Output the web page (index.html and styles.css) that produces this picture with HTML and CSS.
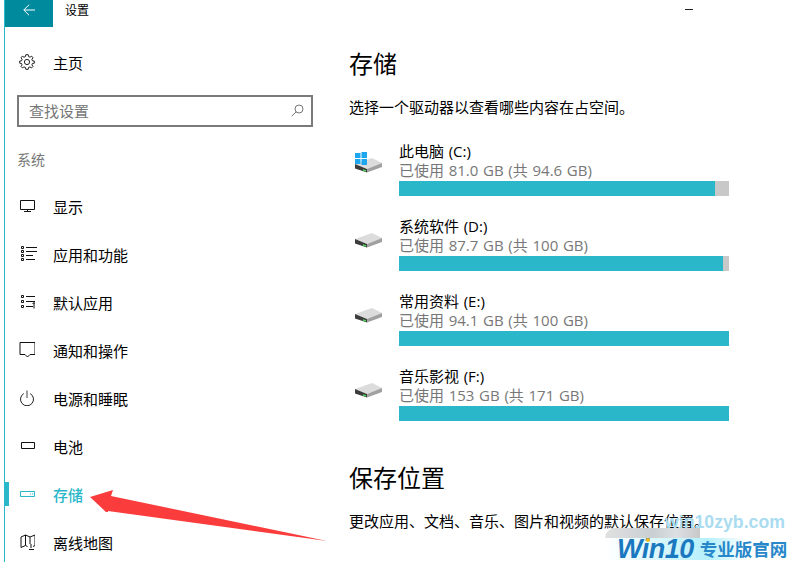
FILE: index.html
```html
<!DOCTYPE html>
<html lang="zh-CN">
<head>
    <meta charset="UTF-8">
    <title>设置</title>
    <link rel="stylesheet" href="styles.css">
</head>
<body>
    <div class="window">
        <header class="titlebar">
            <div class="back-btn">
                <svg width="12" height="12" viewBox="0 0 12 12" fill="none" stroke="#fff" stroke-width="1"><path d="M.8 6H12M6 .8L.8 6L6 11.2"/></svg>
            </div>
            <span class="title">设置</span>
            <span class="min-btn"></span>
        </header>

        <div class="content">
            <nav class="sidebar">
                <div class="home">
                    <svg class="icon" width="16" height="16" viewBox="0 0 16 16" fill="none" stroke="#222" stroke-width="1"><circle cx="8" cy="8" r="2.6"/><path d="M6.8 .7H9.2L9.6 2.6L11 3.2L12.7 2.2L14 3.8L12.9 5.3L13.4 6.8L15.3 7V9.2L13.4 9.5L12.9 10.9L14 12.4L12.5 13.9L11 12.9L9.6 13.4L9.2 15.3H6.8L6.4 13.4L5 12.9L3.4 13.9L2 12.4L3.1 10.9L2.6 9.5L.7 9.2V7L2.6 6.8L3.1 5.3L2 3.8L3.3 2.2L5 3.2L6.4 2.6Z"/></svg>
                    <span>主页</span>
                </div>
                <div class="search">
                    <span>查找设置</span>
                    <svg width="13" height="13" viewBox="0 0 13 13" fill="none" stroke="#777" stroke-width="1"><circle cx="8" cy="5" r="4"/><path d="M5.2 7.8L.7 12.3"/></svg>
                </div>
                <div class="group-label">系统</div>

                <a class="nav-item">
                    <svg class="icon" width="16" height="16" viewBox="0 0 16 16" fill="none" stroke="#111" stroke-width="1"><path d="M1.5 2.5H15.5V11.5H1.5ZM8.5 11.5V13.5M5 13.5H12"/></svg>
                    <span>显示</span>
                </a>
                <a class="nav-item">
                    <svg class="icon" width="16" height="16" viewBox="0 0 16 16" fill="none" stroke="#111" stroke-width="1" overflow="visible"><path d="M2.5 .5H4.5V2.5H2.5ZM2.5 4.5H4.5V6.5H2.5ZM2.5 8.5H4.5V10.5H2.5ZM2.5 12.5H4.5V14.5H2.5ZM7 1.5H18M7 5.5H18M7 9.5H14M7 13.5H16"/></svg>
                    <span>应用和功能</span>
                </a>
                <a class="nav-item">
                    <svg class="icon" width="16" height="16" viewBox="0 0 16 16" fill="none" stroke="#111" stroke-width="1"><path d="M2.5 1.5H4.5V3.5H2.5ZM2.5 6.5H4.5V8.5H2.5ZM2.5 11.5H4.5V13.5H2.5ZM7 2.5H16M7 7.5H16M7 12.5H14M15 14.5V8.5M13.5 10L15 8.5L16.5 10"/></svg>
                    <span>默认应用</span>
                </a>
                <a class="nav-item">
                    <svg class="icon" width="16" height="16" viewBox="0 0 16 16" fill="none" stroke="#111" stroke-width="1"><path d="M1 .5H16V12.5H11L8.5 15L6 12.5H1Z"/></svg>
                    <span>通知和操作</span>
                </a>
                <a class="nav-item">
                    <svg class="icon" width="16" height="16" viewBox="0 0 16 16" fill="none" stroke="#222" stroke-width="1"><path d="M4.8 3.6A6.5 6.5 0 1 0 11.2 3.6"/><path d="M8 .5V8" stroke="#777" stroke-width="1.4"/></svg>
                    <span>电源和睡眠</span>
                </a>
                <a class="nav-item">
                    <svg class="icon" width="16" height="16" viewBox="0 0 16 16" fill="none" stroke="#111" stroke-width="1"><path d="M2.5 4.5H15.5V10.5H2.5Z"/><path d="M16.5 6.5V8.5"/></svg>
                    <span>电池</span>
                </a>
                <a class="nav-item active">
                    <svg class="icon" width="16" height="16" viewBox="0 0 16 16" fill="none" stroke="#2ab7ca" stroke-width="1"><path d="M1.5 5.5H15.5V10.5H1.5ZM11 8H12M13 8H14"/></svg>
                    <span>存储</span>
                </a>
                <a class="nav-item">
                    <svg class="icon" width="16" height="16" viewBox="0 0 16 16" fill="none" stroke="#111" stroke-width="1"><path d="M2 3L6.5 1L11 3L16 1V11.5L14 12.5M2 3V13.5L6.5 11.5L8.5 12.5M6.5 1V11.5M11 3V10M12 10V14M10 15.5H15"/></svg>
                    <span>离线地图</span>
                </a>
            </nav>

            <main class="main">
                <h1>存储</h1>
                <p class="desc">选择一个驱动器以查看哪些内容在占空间。</p>

                <div class="drive">
                    <div class="drive-icon">
                        <svg width="30" height="26" viewBox="0 -5 30 26"><use href="#disk"/><g fill="#1ea7ee"><rect x="1" y="-3" width="5.5" height="5"/><rect x="7.5" y="-4" width="5.5" height="6"/><rect x="1" y="3" width="5.5" height="5"/><rect x="7.5" y="3" width="5.5" height="6"/></g></svg>
                    </div>
                    <div class="drive-info">
                        <div class="drive-name">此电脑 (C:)</div>
                        <div class="drive-used">已使用 81.0 GB (共 94.6 GB)</div>
                        <div class="bar"><div class="fill" style="width: 95.8%"></div></div>
                    </div>
                </div>
                <div class="drive">
                    <div class="drive-icon">
                        <svg width="30" height="26" viewBox="0 -5 30 26"><use href="#disk"/></svg>
                    </div>
                    <div class="drive-info">
                        <div class="drive-name">系统软件 (D:)</div>
                        <div class="drive-used">已使用 87.7 GB (共 100 GB)</div>
                        <div class="bar"><div class="fill" style="width: 98.2%"></div></div>
                    </div>
                </div>
                <div class="drive">
                    <div class="drive-icon">
                        <svg width="30" height="26" viewBox="0 -5 30 26"><use href="#disk"/></svg>
                    </div>
                    <div class="drive-info">
                        <div class="drive-name">常用资料 (E:)</div>
                        <div class="drive-used">已使用 94.1 GB (共 100 GB)</div>
                        <div class="bar"><div class="fill" style="width: 100%"></div></div>
                    </div>
                </div>
                <div class="drive">
                    <div class="drive-icon">
                        <svg width="30" height="26" viewBox="0 -5 30 26"><use href="#disk"/></svg>
                    </div>
                    <div class="drive-info">
                        <div class="drive-name">音乐影视 (F:)</div>
                        <div class="drive-used">已使用 153 GB (共 171 GB)</div>
                        <div class="bar"><div class="fill" style="width: 100%"></div></div>
                    </div>
                </div>

                <h1 class="section-two">保存位置</h1>
                <p class="desc">更改应用、文档、音乐、图片和视频的默认保存位置。</p>
            </main>
        </div>
    </div>

    <!-- 红色箭头 -->
    <svg class="arrow" width="245" height="60" viewBox="0 0 245 60"><path d="M0 8L23 1L21 7L237 52L18 22L18 23L16 23Z" fill="#fb3c3c"/></svg>

    <!-- 水印 -->
    <div class="wm-band"></div>
    <div class="wm-url">win10zyb.com</div>
    <div class="wm-box">
        <span class="wm-logo">Win10</span>
        <span class="wm-name">专业版官网</span>
        <span class="wm-dot"></span>
    </div>

    <svg width="0" height="0" class="defs">
        <defs>
            <g id="disk">
                <path d="M1 8L18 2L28 7L13 13Z" fill="#dcdcdc"/>
                <path d="M1 8V12.5L13 16.5V13Z" fill="#3c3c3c"/>
                <path d="M13 13V16.5L28 11V7Z" fill="#a0a0a0"/>
                <path d="M9 14L12 15" stroke="#4fd05a" stroke-width="1.4"/>
            </g>
        </defs>
    </svg>
</body>
</html>
```

FILE: styles.css
```css
* {
    box-sizing: border-box;
}

html, body {
    height: 100%;
    margin: 0;
    overflow: hidden;
}

body {
    position: relative;
    background: #fff;
    color: #000;
    font-family: "Open Sans", "Noto Sans CJK SC", sans-serif;
    font-size: 15px;
}

.window {
    height: 562px;
    margin-left: 4px;
    border-left: 1px solid #2ab7ca;
    overflow: hidden;
}

.titlebar {
    display: flex;
    align-items: center;
    height: 27px;
}

.back-btn {
    display: flex;
    align-items: center;
    justify-content: center;
    width: 48px;
    height: 27px;
    padding-bottom: 7px;
    background: #008a9e;
}

.title {
    margin: 0 0 7px 12px;
    font-size: 12px;
}

.min-btn {
    width: 8px;
    height: 1px;
    margin-left: 596px;
    margin-bottom: 9px;
    background: #222;
}

.content {
    display: flex;
}

.sidebar {
    flex: none;
    width: 344px;
    padding-top: 20px;
}

.home {
    display: flex;
    align-items: center;
    height: 30px;
    padding-left: 14px;
}

.icon {
    flex: none;
    margin-right: 18px;
}

.search {
    display: flex;
    align-items: center;
    justify-content: space-between;
    width: 296px;
    height: 32px;
    margin: 18px 0 0 12px;
    padding: 0 7px 2px 10px;
    border: 2px solid #7a7a7a;
    color: #777;
}

.group-label {
    height: 22px;
    margin: 22px 0 0 12px;
    color: #777;
    font-size: 14px;
    line-height: 22px;
}

.nav-item {
    display: flex;
    align-items: center;
    height: 48px;
    padding-left: 14px;
}

.group-label + .nav-item {
    margin-top: 11px;
}

.nav-item.active {
    position: relative;
    color: #2ab7ca;
    font-weight: 500;
}

.nav-item.active::before {
    content: "";
    position: absolute;
    left: 0;
    top: 12px;
    width: 4px;
    height: 24px;
    background: #2ab7ca;
}

.main {
    width: 380px;
    padding-top: 19px;
}

h1 {
    margin: 0;
    font-size: 24px;
    font-weight: 400;
    line-height: 36px;
}

.desc {
    margin: 14px 0 0;
    line-height: 22px;
}

.drive {
    display: flex;
    height: 75px;
}

.desc + .drive {
    margin-top: 23px;
}

.drive-icon {
    width: 50px;
    padding-left: 5px;
}

.drive-icon svg {
    display: block;
    margin-top: 10px;
}

.drive-info {
    width: 330px;
}

.drive-name,
.drive-used {
    font-size: 15px;
    line-height: 19px;
    word-spacing: .8px;
}

.drive-name {
    line-height: 20px;
}

.drive-used {
    color: #777;
}

.bar {
    height: 15px;
    margin-top: 1px;
    background: #c8c8c8;
}

.fill {
    height: 100%;
    background: #2ab7ca;
}

.section-two {
    margin-top: 19px;
}

.arrow {
    position: absolute;
    left: 90px;
    top: 489px;
}

.wm-band {
    position: absolute;
    left: 605px;
    top: 528px;
    width: 95px;
    height: 12px;
    border-radius: 10px 0 0 0;
    background: linear-gradient(90deg, #e0e0e0, #c9cfd2 50%, #dce0e2 75%, #c8c8c8);
}

.wm-url {
    position: absolute;
    left: 665px;
    top: 512px;
    color: #aadcf0;
    font-family: "Liberation Sans", sans-serif;
    font-size: 17.7px;
    font-weight: 700;
}

.wm-box {
    position: absolute;
    left: 605px;
    top: 538px;
    display: flex;
    align-items: center;
    width: 188px;
    height: 22px;
    background: linear-gradient(90deg, #fff, #d8f6fc 30%, #b4f0fb 55%, #fff 75%);
}

.wm-logo {
    margin-left: 12px;
    padding-right: 3px;
    color: #1a78c0;
    font-family: "Liberation Sans", sans-serif;
    font-size: 27px;
    font-style: italic;
    font-weight: 700;
    letter-spacing: -.5px;
    line-height: 22px;
}

.wm-name {
    margin-left: 3px;
    color: #2787c9;
    font-size: 17.5px;
    font-weight: 700;
    line-height: 22px;
}

.wm-dot {
    position: absolute;
    left: 41px;
    top: 0;
    width: 4px;
    height: 4px;
    border-radius: 50%;
    background: #fdb813;
}

.defs {
    position: absolute;
}
```
